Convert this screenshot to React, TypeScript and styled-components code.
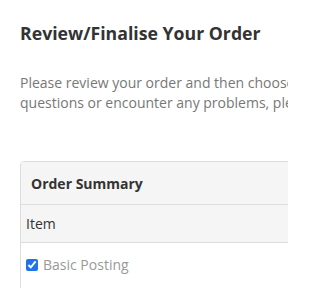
import React from "react";
import styled, { createGlobalStyle } from "styled-components";

const Global = createGlobalStyle`
  html, body { margin: 0; padding: 0; background: #fff; width: 288px; height: 288px; overflow: hidden; }
  body { font-family: "Open Sans", "Liberation Sans", sans-serif; }
  #root { width: 288px; height: 288px; overflow: hidden; }
`;

const Page = styled.div`
  padding: 20px 0 0 20px;
  width: 268px;
`;

const Title = styled.h2`
  margin: 0;
  font-size: 17.7px;
  line-height: 26px;
  font-weight: 700;
  color: #333;
  white-space: nowrap;
`;

const Intro = styled.p`
  margin: 27px 0 0;
  font-size: 14px;
  line-height: 20px;
  color: #777;
  white-space: nowrap;
`;

const Card = styled.div`
  margin-top: 48px;
  width: 400px;
  border: 1px solid #ddd;
  border-radius: 4px 4px 0 0;
`;

const CardHeader = styled.div`
  background: #f5f5f5;
  padding: 0 10px;
  height: 42px;
  display: flex;
  align-items: center;
  font-size: 14px;
  font-weight: 700;
  color: #333;
  border-bottom: 1px solid #ddd;
  border-radius: 4px 4px 0 0;
`;

const HeadRow = styled.div`
  background: #f5f5f5;
  padding: 0 5px;
  height: 37px;
  display: flex;
  align-items: center;
  font-size: 14px;
  color: #333;
  border-bottom: 1px solid #ddd;
`;

const ItemRow = styled.div`
  background: #fff;
  padding: 12px 5px 14px;
  display: flex;
  align-items: center;
  gap: 5px;
  font-size: 14px;
  line-height: 20px;
  color: #999;
`;

const Check = styled.input`
  margin: 0;
  width: 12px;
  height: 12px;
  accent-color: #1e73e8;
`;

export default function App() {
  return (
    <>
      <Global />
      <Page>
        <Title>Review/Finalise Your Order</Title>
        <Intro>
          Please review your order and then choose how you would like to pay. If you have any
          <br />
          questions or encounter any problems, please contact us.
        </Intro>
        <Card>
          <CardHeader>Order Summary</CardHeader>
          <HeadRow>Item</HeadRow>
          <ItemRow>
            <Check type="checkbox" defaultChecked readOnly />
            Basic Posting
          </ItemRow>
        </Card>
      </Page>
    </>
  );
}
